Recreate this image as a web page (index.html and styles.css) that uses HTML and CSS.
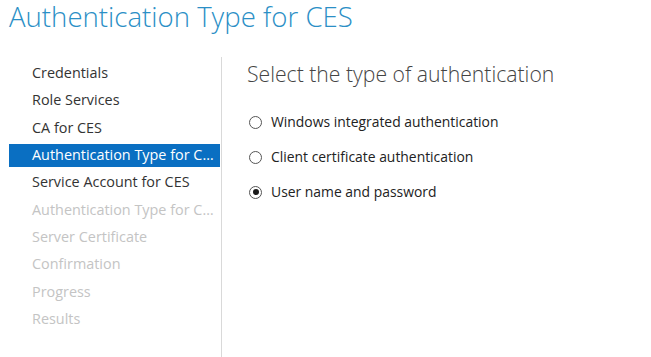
FILE: index.html
```html
<!DOCTYPE html>
<html>
<head>
<meta charset="utf-8">
<link rel="stylesheet" href="styles.css">
</head>
<body>
<div class="page">
  <h1 class="title">Authentication Type for CES</h1>
  <div class="main">
    <nav class="steps">
      <div class="step">Credentials</div>
      <div class="step">Role Services</div>
      <div class="step">CA for CES</div>
      <div class="step active">Authentication Type for CES</div>
      <div class="step">Service Account for CES</div>
      <div class="step disabled">Authentication Type for CES</div>
      <div class="step disabled">Server Certificate</div>
      <div class="step disabled">Confirmation</div>
      <div class="step disabled">Progress</div>
      <div class="step disabled">Results</div>
    </nav>
    <section class="content">
      <h2 class="heading">Select the type of authentication</h2>
      <div class="options">
        <label class="option"><span class="radio"></span><span class="label">Windows integrated authentication</span></label>
        <label class="option"><span class="radio"></span><span class="label">Client certificate authentication</span></label>
        <label class="option"><span class="radio checked"></span><span class="label">User name and password</span></label>
      </div>
    </section>
  </div>
</div>
</body>
</html>
```

FILE: styles.css
```css
html, body {
  margin: 0;
  padding: 0;
  background: #ffffff;
  width: 651px;
  height: 357px;
  overflow: hidden;
}

.page {
  font-family: "Open Sans", "Noto Sans", sans-serif;
  display: flex;
  flex-direction: column;
  height: 357px;
}

.title {
  margin: 0;
  padding-left: 9px;
  font-size: 27.6px;
  font-weight: 300;
  color: #2b8fc6;
  line-height: 32px;
  height: 57px;
  white-space: nowrap;
}

.main {
  display: flex;
  flex: 1;
}

.steps {
  width: 222px;
  border-right: 1px solid #d9d9d9;
  padding-top: 5px;
  display: flex;
  flex-direction: column;
  gap: 4.33px;
  box-sizing: border-box;
}

.step {
  margin-left: 9px;
  width: 211px;
  height: 23px;
  line-height: 22px;
  padding-left: 23px;
  padding-right: 3px;
  box-sizing: border-box;
  font-size: 14.4px;
  color: #333333;
  white-space: nowrap;
  overflow: hidden;
  text-overflow: ellipsis;
}

.step.active {
  background: #0a6fc2;
  color: #ffffff;
}

.step.disabled {
  color: #c4c4c4;
}

.content {
  padding-left: 25px;
  padding-top: 3px;
}

.heading {
  margin: 0;
  font-size: 21.2px;
  font-weight: 300;
  color: #444444;
  line-height: 28px;
}

.options {
  margin-top: 24px;
  display: flex;
  flex-direction: column;
  gap: 15px;
}

.option {
  display: flex;
  align-items: center;
  height: 20px;
  line-height: 20px;
}

.radio {
  width: 13px;
  height: 13px;
  border: 1px solid #555555;
  border-radius: 50%;
  box-sizing: border-box;
  margin-left: 2px;
  margin-right: 9px;
  position: relative;
  background: #ffffff;
}

.radio.checked::after {
  content: "";
  position: absolute;
  left: 2.5px;
  top: 2.5px;
  width: 6px;
  height: 6px;
  border-radius: 50%;
  background: #1a1a1a;
}

.label {
  font-size: 13.9px;
  color: #222222;
}
```
